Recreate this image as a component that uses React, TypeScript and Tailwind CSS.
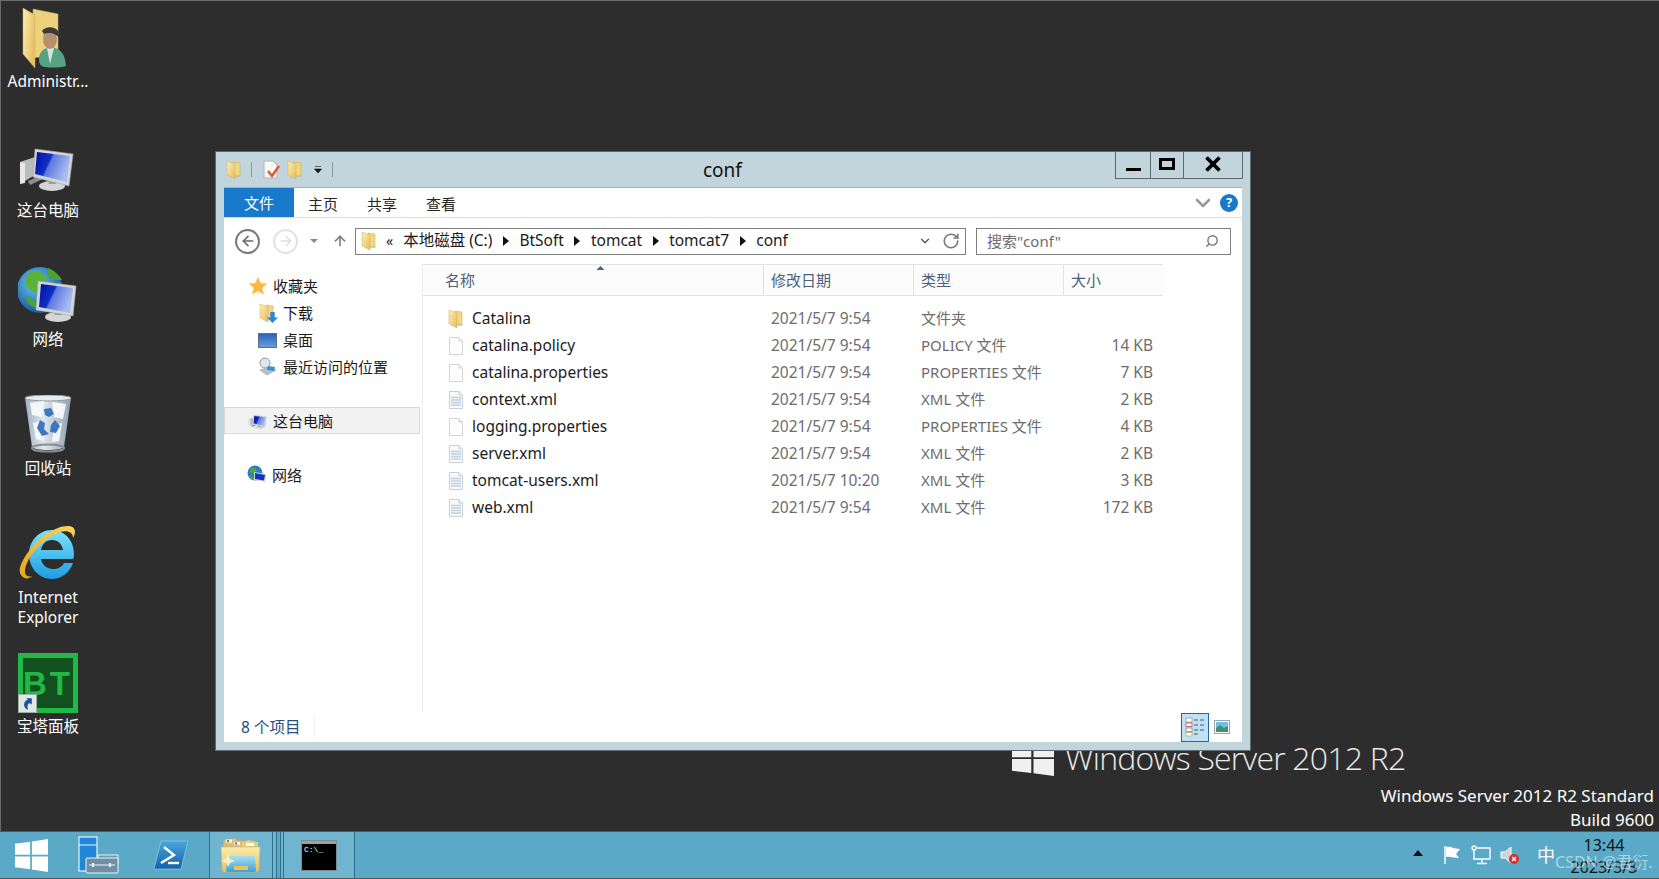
import React from "react";
import { ArrowLeft, ArrowRight, ArrowUp, ChevronDown, RotateCw, Search, X } from "lucide-react";

// 小图标
function SmallFolder({ className = "" }: { className?: string }) {
  return (
    <svg viewBox="0 0 18 20" className={className}>
      <defs>
        <linearGradient id="sf" x1="0" y1="0" x2="1" y2="1">
          <stop offset="0" stopColor="#fdf0b4" />
          <stop offset="1" stopColor="#e3bc5c" />
        </linearGradient>
      </defs>
      <path d="M8 2 L15 3 L15 16 L8 16 Z" fill="#f3d67f" stroke="#cda94f" strokeWidth="0.5" />
      <path d="M2 1 L10 4 L10 19 L2 15 Z" fill="url(#sf)" stroke="#d0ae58" strokeWidth="0.5" />
      <path d="M10 17 L16 17 L15 15 L10 15 Z" fill="#b9b9b0" opacity="0.5" />
    </svg>
  );
}

function BlankFile() {
  return (
    <svg viewBox="0 0 18 20" className="h-5 w-[18px]">
      <path d="M2.5 1.5 H12 L15.5 5 V18.5 H2.5 Z" fill="#fdfdfd" stroke="#d3d3d3" />
      <path d="M12 1.5 V5 H15.5" fill="#f0f0f0" stroke="#d3d3d3" />
    </svg>
  );
}

function XmlFile() {
  return (
    <svg viewBox="0 0 18 20" className="h-5 w-[18px]">
      <path d="M2.5 1.5 H12 L15.5 5 V18.5 H2.5 Z" fill="#f7f9fb" stroke="#c9ced3" />
      <path d="M12 1.5 V5 H15.5" fill="#eef0f2" stroke="#c9ced3" />
      <path d="M4 7.5 H14 M4 10 H14 M4 12.5 H14 M4 15 H14" stroke="#c0d0e0" strokeWidth="1.4" />
    </svg>
  );
}

function Monitor({ className = "" }: { className?: string }) {
  return (
    <svg viewBox="0 0 60 60" className={className}>
      <defs>
        <linearGradient id="scr" x1="0" y1="0" x2="1" y2="0.4">
          <stop offset="0" stopColor="#00109c" />
          <stop offset="0.45" stopColor="#1030c8" />
          <stop offset="0.5" stopColor="#5c78e0" />
          <stop offset="1" stopColor="#a8bcf0" />
        </linearGradient>
      </defs>
      <path d="M2 25 L17 20 V38 L2 47 Z" fill="#b9bcbc" />
      <path d="M2 25 L7 26 V46 L2 47 Z" fill="#e6e8e6" />
      <path d="M10 44 L24 38 L27 41 L12 48 Z" fill="#8d8f8e" />
      <ellipse cx="34" cy="49" rx="13" ry="5" fill="#d5d5d5" />
      <path d="M28 38 H40 L38 47 H31 Z" fill="#9a9a9a" />
      <path d="M17 12 L55 17 L51 49 L15 40 Z" fill="#d3d6d8" stroke="#a5a8aa" strokeWidth="0.6" />
      <path d="M19 15 L52 19 L49 45 L17 37 Z" fill="url(#scr)" />
    </svg>
  );
}

function DesktopIcon({ label, children }: { label: React.ReactNode; children: React.ReactNode }) {
  return (
    <div className="flex h-[129px] w-[96px] flex-col items-center">
      <div className="h-[60px] w-[60px] shrink-0">{children}</div>
      <div className="mt-[3px] text-center text-[15.5px] leading-[20px] text-white">{label}</div>
    </div>
  );
}

function AdminIcon() {
  return (
    <svg viewBox="0 0 60 60" className="h-[60px] w-[60px]">
      <defs>
        <linearGradient id="adf" x1="0" y1="0" x2="1" y2="0.4">
          <stop offset="0" stopColor="#fdeeb0" />
          <stop offset="1" stopColor="#e7c062" />
        </linearGradient>
      </defs>
      <path d="M15 1 L40 6 L40 46 L15 50 Z" fill="#edd27c" stroke="#cfae5c" strokeWidth="0.5" />
      <path d="M5 0 L17 7 L17 60 L5 46 Z" fill="url(#adf)" stroke="#cfae5c" strokeWidth="0.5" />
      <path d="M21 52 C21 43 26 40 33 39 C41 40 47 44 48 58 C42 60 26 60 24 58 C22 57 21 55 21 52 Z" fill="#58a284" />
      <path d="M29 40 L36 40 L32 56 Z" fill="#d6e4e2" />
      <ellipse cx="32" cy="31" rx="7" ry="10" fill="#b78e6e" />
      <path d="M24 23 C27 18 37 18 40 23 L41 30 C38 25 30 24 26 26 Z" fill="#3a3a3a" />
    </svg>
  );
}

function GlobeIcon() {
  return (
    <svg viewBox="0 0 60 60" className="h-[60px] w-[60px]">
      <defs>
        <radialGradient id="gl" cx="0.4" cy="0.35" r="0.7">
          <stop offset="0" stopColor="#6ecbf0" />
          <stop offset="1" stopColor="#0f4f9c" />
        </radialGradient>
        <linearGradient id="scr2" x1="0" y1="0" x2="1" y2="0.4">
          <stop offset="0" stopColor="#00109c" />
          <stop offset="0.45" stopColor="#1030c8" />
          <stop offset="0.5" stopColor="#5c78e0" />
          <stop offset="1" stopColor="#a8bcf0" />
        </linearGradient>
      </defs>
      <circle cx="22" cy="24" r="23" fill="url(#gl)" />
      <path d="M10 8 C16 3 24 6 28 10 C30 16 22 16 20 22 C22 30 14 26 10 22 C6 18 8 12 10 8 Z" fill="#5cb13a" />
      <path d="M30 2 C36 4 42 10 44 14 L34 14 C30 10 28 6 30 2 Z M8 30 C14 32 20 38 24 42 C16 44 8 38 8 30 Z" fill="#4aa233" />
      <ellipse cx="40" cy="51" rx="13" ry="5" fill="#d5d5d5" />
      <path d="M34 42 H46 L44 49 H37 Z" fill="#9a9a9a" />
      <path d="M20 15 L58 20 L55 50 L18 44 Z" fill="#d3d6d8" stroke="#a5a8aa" strokeWidth="0.6" />
      <path d="M23 18 L55 22 L52 47 L21 41 Z" fill="url(#scr2)" />
    </svg>
  );
}

function RecycleIcon() {
  return (
    <svg viewBox="0 0 60 60" className="h-[60px] w-[60px]">
      <defs>
        <linearGradient id="bin" x1="0" y1="0" x2="1" y2="0">
          <stop offset="0" stopColor="#9eb0c2" />
          <stop offset="0.4" stopColor="#dfe8f0" />
          <stop offset="1" stopColor="#90a0b0" />
        </linearGradient>
      </defs>
      <path d="M7 3 L53 3 L46 52 C44 56 16 56 14 52 Z" fill="url(#bin)" />
      <ellipse cx="30" cy="3" rx="23" ry="3" fill="#e8ecf0" stroke="#9a9a9a" />
      <path d="M12 8 L26 6 L24 22 L14 20 Z M34 7 L48 9 L45 24 L36 22 Z M15 28 L24 26 L26 46 L18 44 Z M36 30 L44 28 L41 46 L34 47 Z" fill="#f4f7fa" />
      <path d="M26 14 L33 13 L36 19 L31 22 L27 20 Z M37 25 L42 31 L38 38 L32 37 L33 30 Z M22 25 L27 28 L26 34 L31 39 L24 41 L19 33 Z" fill="#3f76c4" />
      <ellipse cx="30" cy="53" rx="16" ry="3.5" fill="none" stroke="#8d8d8d" strokeWidth="2" />
    </svg>
  );
}

function IeIcon() {
  return (
    <svg viewBox="0 0 60 60" className="h-[60px] w-[60px]">
      <defs>
        <linearGradient id="ie" x1="0" y1="0" x2="0" y2="1">
          <stop offset="0" stopColor="#7de2f8" />
          <stop offset="1" stopColor="#1d9de2" />
        </linearGradient>
        <linearGradient id="ier" x1="0" y1="1" x2="1" y2="0">
          <stop offset="0" stopColor="#e8a51c" />
          <stop offset="1" stopColor="#fbd35c" />
        </linearGradient>
      </defs>
      <path fillRule="evenodd" fill="url(#ie)" d="M34 6 C46 6 56 16 56 30 C56 32 56 33 55 35 L23 35 C24 41 29 45 35 45 C40 45 44 43 46 39 L55 39 C52 48 44 55 34 55 C21 55 11 44 11 30 C11 17 21 6 34 6 Z M23 26 L45 26 C44 20 40 16 34 16 C28 16 24 20 23 26 Z" />
      <path d="M2 49 C-1 40 18 12 40 4 C48 1 57 1 57 8 C57 10 56 12 55 14 C55 8 50 6 42 8 C24 14 6 36 7 49 C8 52 10 53 14 52 C10 56 4 55 2 49 Z" fill="url(#ier)" />
    </svg>
  );
}

function BtIcon() {
  return (
    <div className="relative flex h-[60px] w-[60px] items-center justify-center border-[5px] border-[#22b845] bg-[#12501f]">
      <span className="font-['Liberation_Sans',sans-serif] text-[33px] font-bold leading-none tracking-[3px] text-[#22b845]">BT</span>
      <div className="absolute bottom-[-5px] left-[-5px] flex h-[19px] w-[19px] items-center justify-center border border-[#9ab0a8] bg-[#dfe8e4]">
        <svg viewBox="0 0 14 14" className="h-[15px] w-[15px]">
          <path d="M11 2 L11 8 L9 6.5 C7 7.5 6.5 9 7.5 13 C4 11.5 3 8 4.5 5.5 C5.5 4 6.5 3.5 7.5 3.5 L6 2 Z" fill="#1f4f9c" />
        </svg>
      </div>
    </div>
  );
}

// 任务栏图标
function CmdIcon() {
  return (
    <div className="w-[36px] border border-[#7d8a90] bg-[#9aa3a8] pt-[3px]">
      <div className="h-[26px] bg-black px-[2px] font-['Liberation_Mono',monospace] text-[8px] leading-[12px] text-white">C:\_</div>
    </div>
  );
}

function ExplorerTaskIcon() {
  return (
    <svg viewBox="0 0 42 36" className="h-[36px] w-[42px]">
      <defs>
        <linearGradient id="tf" x1="0" y1="0" x2="0" y2="1">
          <stop offset="0" stopColor="#f9ecaa" />
          <stop offset="1" stopColor="#e5c25e" />
        </linearGradient>
        <linearGradient id="tb" x1="0" y1="0" x2="0" y2="1">
          <stop offset="0" stopColor="#a9e0f4" />
          <stop offset="1" stopColor="#3f9fd4" />
        </linearGradient>
      </defs>
      <path d="M3 3 L15 1 L17 3 L37 5 L37 12 L3 12 Z" fill="#d9c078" stroke="#b49c55" strokeWidth="0.5" />
      <rect x="6" y="2.5" width="6" height="3" fill="#fafafa" />
      <rect x="7" y="3" width="2" height="2" fill="#3e9e3a" />
      <rect x="14" y="5" width="6" height="3" fill="#fafafa" />
      <rect x="15" y="5.5" width="2" height="2" fill="#c83a2a" />
      <path d="M22 6 L28 3 L38 5 L38 12 L22 12 Z" fill="#e7cd7c" />
      <rect x="26" y="6" width="8" height="3" fill="#fafafa" />
      <path d="M1 10 H40 L39 32 C39 34 38 35 36 35 H4 C2 35 2 34 2 32 Z" fill="url(#tf)" stroke="#cfae55" strokeWidth="0.5" />
      <path d="M6 32 L7 21 C7 19 8 19 10 19 H32 C34 19 35 19 35 21 L36 33 C36 35 35 35 34 35 H8 C7 35 6 34 6 32 Z" fill="url(#tb)" />
      <path d="M14 29 H28 V33 H14 Z" fill="#e3c560" />
      <path d="M1 24 L6 22 L8 17 L10 22 L15 24 L10 26 L8 30 L6 26 Z" fill="#fff6c8" opacity="0.85" />
    </svg>
  );
}

const files = [
  { name: "Catalina", date: "2021/5/7 9:54", type: "文件夹", size: "", kind: "folder" },
  { name: "catalina.policy", date: "2021/5/7 9:54", type: "POLICY 文件", size: "14 KB", kind: "blank" },
  { name: "catalina.properties", date: "2021/5/7 9:54", type: "PROPERTIES 文件", size: "7 KB", kind: "blank" },
  { name: "context.xml", date: "2021/5/7 9:54", type: "XML 文件", size: "2 KB", kind: "xml" },
  { name: "logging.properties", date: "2021/5/7 9:54", type: "PROPERTIES 文件", size: "4 KB", kind: "blank" },
  { name: "server.xml", date: "2021/5/7 9:54", type: "XML 文件", size: "2 KB", kind: "xml" },
  { name: "tomcat-users.xml", date: "2021/5/7 10:20", type: "XML 文件", size: "3 KB", kind: "xml" },
  { name: "web.xml", date: "2021/5/7 9:54", type: "XML 文件", size: "172 KB", kind: "xml" },
];

const crumbs = ["本地磁盘 (C:)", "BtSoft", "tomcat", "tomcat7"];

function Crumbs() {
  return (
    <div className="flex items-center text-[15.5px] leading-none text-[#1a1a1a]">
      {crumbs.map((c) => (
        <React.Fragment key={c}>
          <span>{c}</span>
          <svg viewBox="0 0 6 10" className="mx-[10.5px] h-[10px] w-[6px]">
            <path d="M0 0 L6 5 L0 10 Z" fill="#111" />
          </svg>
        </React.Fragment>
      ))}
      <span>conf</span>
    </div>
  );
}

function ExplorerWindow() {
  return (
    <div className="absolute left-[214px] top-[150px] flex h-[600px] w-[1036px] flex-col border border-[#5c6a70] bg-[#c3d5dc] px-[8px] pb-[8px]">
      {/* 标题栏 */}
      <div className="relative flex h-[35px] shrink-0 items-center">
        <SmallFolder className="ml-[1px] h-[20px] w-[18px]" />
        <div className="ml-[8px] h-[15px] w-px bg-[#8c9a9f]" />
        <svg viewBox="0 0 18 20" className="ml-[10px] h-[20px] w-[18px]">
          <path d="M2 1 H11 L15 5 V18 H2 Z" fill="#f7f7f7" stroke="#b5b5b5" />
          <path d="M6 11 L10 16 L17 6" fill="none" stroke="#d85a35" strokeWidth="2.4" />
        </svg>
        <SmallFolder className="ml-[6px] h-[20px] w-[18px]" />
        <svg viewBox="0 0 8 8" className="ml-[10px] h-[8px] w-[8px]">
          <path d="M1 0.5 H7 M0.5 3 H7.5 L4 7 Z" fill="#111" stroke="#111" strokeWidth="0.6" />
        </svg>
        <div className="ml-[10px] h-[15px] w-px bg-[#8c9a9f]" />
        <div className="absolute left-[479px] top-[6px] text-[19px] leading-[24px] text-[#111]">conf</div>
        <div className="ml-auto mr-[-1px] flex h-[27px] self-start border border-t-0 border-[#5c6a70]">
          <div className="flex w-[35px] items-end justify-center border-r border-[#5c6a70] pb-[7px]">
            <div className="h-[3px] w-[15px] bg-black" />
          </div>
          <div className="flex w-[33px] items-center justify-center border-r border-[#5c6a70] pb-[3px]">
            <div className="h-[12px] w-[16px] border-[3px] border-black" />
          </div>
          <div className="flex w-[58px] items-center justify-center pb-[2px]">
            <X className="h-[26px] w-[26px] text-black" strokeWidth={3.4} strokeLinecap="butt" />
          </div>
        </div>
      </div>

      <div className="flex min-h-0 flex-1 flex-col border-t border-[#a4b2b8] bg-white">
        {/* 选项卡 */}
        <div className="flex h-[30px] shrink-0 items-center border-b border-[#dadbdc] text-[15px] text-[#262626]">
          <div className="flex h-[29px] w-[70px] items-center justify-center bg-[#1979ca] pt-[2px] text-white">文件</div>
          <div className="ml-[14px] pt-[3px]">主页</div>
          <div className="ml-[29px] pt-[3px]">共享</div>
          <div className="ml-[29px] pt-[3px]">查看</div>
          <ChevronDown className="ml-auto h-[24px] w-[24px] text-[#9a9a9a]" strokeWidth={2.6} />
          <div className="ml-[5px] mr-[4px] flex h-[18px] w-[18px] items-center justify-center rounded-full bg-[#1979ca] text-[13px] font-bold leading-none text-white">?</div>
        </div>

        {/* 地址栏 */}
        <div className="flex h-[46px] shrink-0 items-center pl-[11px] pr-[10px]">
          <div className="flex h-[25px] w-[25px] items-center justify-center rounded-full border-2 border-[#7b7b7b]">
            <ArrowLeft className="h-[16px] w-[16px] text-[#6a6a6a]" strokeWidth={2.4} />
          </div>
          <div className="ml-[13px] flex h-[25px] w-[25px] items-center justify-center rounded-full border-2 border-[#e2e2e2]">
            <ArrowRight className="h-[16px] w-[16px] text-[#dedede]" strokeWidth={2} />
          </div>
          <svg viewBox="0 0 8 4" className="ml-[12px] h-[4px] w-[8px]">
            <path d="M0 0 H8 L4 4 Z" fill="#8a8a8a" />
          </svg>
          <ArrowUp className="ml-[14px] h-[16px] w-[16px] text-[#7c7c7c]" strokeWidth={2.4} />
          <div className="ml-[7px] flex h-[27px] w-[611px] items-center border border-[#7f7f7f] pl-[4px]">
            <SmallFolder className="h-[20px] w-[18px]" />
            <span className="ml-[8px] mr-[10px] text-[14px] leading-none text-[#222]">«</span>
            <Crumbs />
            <ChevronDown className="ml-auto h-[14px] w-[14px] text-[#555]" strokeWidth={2.2} />
            <RotateCw className="ml-[10px] mr-[5px] h-[18px] w-[18px] text-[#7a7a7a]" strokeWidth={2.2} />
          </div>
          <div className="ml-[10px] flex h-[27px] w-[255px] items-center border border-[#7f7f7f] pl-[10px] pr-[11px] text-[15px] text-[#6d6d6d]">
            <span>搜索"conf"</span>
            <Search className="ml-auto h-[14px] w-[14px] -scale-x-100 text-[#7a7a7a]" strokeWidth={2.4} />
          </div>
        </div>

        <div className="flex min-h-0 flex-1">
          {/* 导航窗格 */}
          <div className="flex w-[199px] shrink-0 flex-col border-r border-[#ececec] text-[15px] leading-[20px] text-[#1a1a1a]">
            <div className="ml-[24px] mt-[11px] flex h-[22px] items-center">
              <svg viewBox="0 0 20 20" className="h-[20px] w-[20px]">
                <path d="M10 1 L12.6 7 L19 7.6 L14.2 12 L15.8 18.6 L10 15 L4.2 18.6 L5.8 12 L1 7.6 L7.4 7 Z" fill="#fbb83a" stroke="#f4d996" strokeWidth="0.6" />
              </svg>
              <span className="ml-[5px]">收藏夹</span>
            </div>
            <div className="ml-[34px] mt-[5px] flex h-[22px] items-center">
              <div className="relative h-[20px] w-[20px]">
                <SmallFolder className="h-[20px] w-[18px]" />
                <ArrowDownMini />
              </div>
              <span className="ml-[5px]">下载</span>
            </div>
            <div className="ml-[34px] mt-[5px] flex h-[22px] items-center">
              <div className="h-[15px] w-[19px] border border-[#5e6f80] bg-gradient-to-b from-[#2a63b8] to-[#6a9ae0]" />
              <span className="ml-[6px]">桌面</span>
            </div>
            <div className="ml-[34px] mt-[5px] flex h-[22px] items-center">
              <svg viewBox="0 0 20 20" className="h-[20px] w-[20px]">
                <circle cx="7" cy="6" r="5" fill="#dfe6ec" stroke="#8d9aa5" />
                <path d="M2 13 L12 10 L18 13 L9 18 Z" fill="#b8c2cc" stroke="#8d9aa5" strokeWidth="0.6" />
                <path d="M10 9 L17 10 L16 14 L9 13 Z" fill="#3d8fce" />
              </svg>
              <span className="ml-[5px]">最近访问的位置</span>
            </div>
            <div className="mr-[2px] mt-[29px] flex h-[27px] items-center border border-[#dadada] bg-[#f2f2f2] pl-[23px]">
              <Monitor className="h-[20px] w-[20px]" />
              <span className="ml-[5px]">这台电脑</span>
            </div>
            <div className="ml-[23px] mt-[30px] flex h-[22px] items-center">
              <GlobeMini />
              <span className="ml-[5px]">网络</span>
            </div>
          </div>

          {/* 文件列表 */}
          <div className="min-w-0 flex-1">
            <div className="relative grid h-[32px] w-[740px] grid-cols-[340px_150px_150px_100px] border-y border-[#e2e2e2] bg-[#fcfcfc] text-[15px] leading-[30px] text-[#4c607a]">
              <div className="pl-[22px]">名称</div>
              <div className="border-l border-[#e2e2e2] pl-[7px]">修改日期</div>
              <div className="border-l border-[#e2e2e2] pl-[7px]">类型</div>
              <div className="border-l border-[#e2e2e2] pl-[7px]">大小</div>
              <svg viewBox="0 0 8 4" className="absolute left-[173px] top-[1px] h-[4px] w-[9px]">
                <path d="M0 4 L4 0 L8 4 Z" fill="#4c607a" />
              </svg>
            </div>
            <div className="w-[740px] pt-[9px]">
              {files.map((f) => (
                <div key={f.name} className="grid h-[27px] grid-cols-[340px_150px_150px_100px] items-center text-[15.5px]">
                  <div className="flex items-center pl-[24px] text-[#1c1c1c]">
                    {f.kind === "folder" ? (
                      <SmallFolder className="h-5 w-[18px]" />
                    ) : f.kind === "xml" ? (
                      <XmlFile />
                    ) : (
                      <BlankFile />
                    )}
                    <span className="ml-[7px]">{f.name}</span>
                  </div>
                  <div className="pl-[8px] text-[15.5px] text-[#6d6d6d]">{f.date}</div>
                  <div className="pl-[8px] text-[15px] text-[#6d6d6d]">{f.type}</div>
                  <div className="pr-[10px] text-right text-[15.5px] text-[#6d6d6d]">{f.size}</div>
                </div>
              ))}
            </div>
          </div>
        </div>

        {/* 状态栏 */}
        <div className="flex h-[30px] shrink-0 items-center">
          <span className="ml-[17px] pt-[2px] text-[15.5px] text-[#26507c]">8 个项目</span>
          <div className="ml-[14px] h-[20px] w-px bg-[#f0f0f0]" />
          <div className="ml-auto mr-[12px] flex items-end">
            <div className="flex h-[29px] w-[28px] items-center justify-center border border-[#26689c] bg-[#bfe0f6]">
              <svg viewBox="0 0 20 20" className="h-[20px] w-[20px]">
                <rect x="1" y="1" width="6" height="4" fill="#fff" stroke="#8a9a70" strokeWidth="0.7" />
                <rect x="1" y="6" width="6" height="3.5" fill="#fff" stroke="#c0392b" strokeWidth="0.7" />
                <rect x="1" y="11" width="6" height="3.5" fill="#fff" stroke="#5a80b0" strokeWidth="0.7" />
                <rect x="1" y="15.5" width="6" height="3.5" fill="#fff" stroke="#b0a840" strokeWidth="0.7" />
                <path d="M9 3 H13 M15 3 H19 M9 8 H13 M15 8 H19 M9 13 H13 M15 13 H19 M9 17 H13" stroke="#4a5a70" strokeWidth="1" />
              </svg>
            </div>
            <svg viewBox="0 0 16 14" className="mb-[8px] ml-[5px] h-[14px] w-[16px]">
              <rect x="0.5" y="0.5" width="15" height="13" fill="#fff" stroke="#9aa6b2" />
              <rect x="2" y="2" width="12" height="6" fill="#6fc0e8" />
              <path d="M2 8 L6 5 L10 8 L14 6 V12 H2 Z" fill="#3f8f70" />
            </svg>
          </div>
        </div>
      </div>
    </div>
  );
}

function ArrowDownMini() {
  return (
    <svg viewBox="0 0 10 10" className="absolute bottom-0 right-0 h-[11px] w-[11px]">
      <path d="M3 0 H7 V5 H10 L5 10 L0 5 H3 Z" fill="#2f86d0" />
    </svg>
  );
}

function GlobeMini() {
  return (
    <svg viewBox="0 0 20 20" className="h-[20px] w-[20px]">
      <circle cx="8" cy="8" r="7.5" fill="#2a7ec4" />
      <path d="M3 4 C6 2 10 3 9 6 C7 9 5 8 3 7 Z M2 10 C5 11 7 13 8 15 C5 15 3 13 2 10 Z" fill="#4faa3a" />
      <path d="M7 7 L19 9 L18 17 L7 15 Z" fill="#d3d6d8" />
      <path d="M8 8 L18 10 L17 15.6 L8 14 Z" fill="#1733b8" />
    </svg>
  );
}

function WinLogo({ className = "", color = "white" }: { className?: string; color?: string }) {
  return (
    <svg viewBox="0 0 34 34" preserveAspectRatio="none" className={className}>
      <path d="M0 5 L15.6 2.8 V16.2 H0 Z M17.4 2.5 L34 0 V16.2 H17.4 Z M0 18 H15.6 V31.2 L0 29 Z M17.4 18 H34 V34 L17.4 31.5 Z" fill={color} />
    </svg>
  );
}

function Taskbar() {
  return (
    <div className="flex h-[48px] shrink-0 items-stretch border-y border-[#4b5b62] bg-[#5aaac7] pl-[1px] text-[#111]">
      <div className="flex w-[209px] items-center border-r border-[#2e6e88]">
        <WinLogo className="ml-[14px] h-[33px] w-[33px]" />
        <svg viewBox="0 0 42 38" className="ml-[30px] h-[38px] w-[42px]">
          <rect x="1" y="1" width="18" height="34" fill="#1f86d8" stroke="#e6f4fa" strokeWidth="1.2" />
          <path d="M1 9 H19" stroke="#e6f4fa" />
          <rect x="20" y="19" width="20" height="8" fill="#6f97ab" stroke="#e6f4fa" strokeWidth="1" />
          <rect x="8" y="22" width="32" height="15" rx="1" fill="#6f8fa5" stroke="#eef6fa" strokeWidth="1" />
          <path d="M11 29 H37" stroke="#eef6fa" />
          <rect x="14" y="27" width="2" height="4" fill="#eef6fa" />
          <rect x="31" y="27" width="2" height="4" fill="#eef6fa" />
        </svg>
        <svg viewBox="0 0 36 32" className="ml-[33px] h-[32px] w-[36px]">
          <defs>
            <linearGradient id="ps" x1="0" y1="0" x2="0" y2="1">
              <stop offset="0" stopColor="#4aa6de" />
              <stop offset="1" stopColor="#1460a8" />
            </linearGradient>
          </defs>
          <path d="M8 2 H35 L28 30 H1 Z" fill="url(#ps)" stroke="#8cc4e4" strokeWidth="0.8" />
          <path d="M11 8 L21 16 L8 24" fill="none" stroke="white" strokeWidth="2.4" />
          <path d="M15 24 H26" stroke="white" strokeWidth="2.4" />
        </svg>
      </div>
      <div className="flex w-[63px] items-center justify-center border-r border-[#2e6e88] bg-[#6fb5d0]">
        <ExplorerTaskIcon />
      </div>
      <div className="w-[4px] border-r border-[#2e6e88] bg-[#6fb5d0]" />
      <div className="w-[4px] border-r border-[#2e6e88]" />
      <div className="w-[3px] border-r border-[#2e6e88] bg-[#6fb5d0]" />
      <div className="flex w-[71px] items-center justify-center border-r border-[#2e6e88] bg-[#6fb5d0]">
        <CmdIcon />
      </div>
      {/* 通知区域 */}
      <div className="ml-auto flex items-center pr-[15px]">
        <svg viewBox="0 0 10 6" className="mt-[-4px] h-[6px] w-[10px]">
          <path d="M0 6 L5 0 L10 6 Z" fill="#111" />
        </svg>
        <svg viewBox="0 0 18 20" className="ml-[20px] h-[20px] w-[18px]">
          <path d="M2 1 V19" stroke="white" strokeWidth="1.4" />
          <path d="M3 2 C8 1 10 4 17 4 L13 9 L16 13 C10 13 8 11 3 12 Z" fill="#fff" />
        </svg>
        <svg viewBox="0 0 20 20" className="ml-[10px] h-[20px] w-[20px]" fill="none" stroke="white" strokeWidth="1.4">
          <circle cx="3" cy="3" r="2" />
          <path d="M3 5 V15 M6 3 H19 V14 H3 M11 14 V18 M6 18.5 H16" />
        </svg>
        <svg viewBox="0 0 20 20" className="ml-[9px] h-[20px] w-[20px]">
          <path d="M1 7 H5 L11 2 V18 L5 13 H1 Z" fill="#c9d3d8" stroke="white" strokeWidth="1" />
          <circle cx="14" cy="14" r="5" fill="#d92d2d" />
          <path d="M12 12 L16 16 M16 12 L12 16" stroke="white" strokeWidth="1.4" />
        </svg>
        <span className="ml-[17px] text-[18px] leading-none text-white">中</span>
        <div className="ml-[9px] flex w-[80px] flex-col items-center pt-[1px] text-[16px] leading-[22px] text-[#111]">
          <span>13:44</span>
          <span>2023/3/3</span>
        </div>
      </div>
    </div>
  );
}

export default function App() {
  return (
    <div className="flex h-[879px] w-[1659px] flex-col overflow-hidden bg-[#2d2d2d] font-['Noto_Sans','Noto_Sans_CJK_SC',sans-serif]">
      <div className="relative min-h-0 flex-1 border-l border-t border-[#6a6a6a]">
        {/* 桌面图标 */}
        <div className="ml-[-1px] pt-[7px]">
          <DesktopIcon label="Administr..."><AdminIcon /></DesktopIcon>
          <DesktopIcon label="这台电脑"><Monitor className="h-[60px] w-[60px]" /></DesktopIcon>
          <DesktopIcon label="网络"><GlobeIcon /></DesktopIcon>
          <DesktopIcon label="回收站"><RecycleIcon /></DesktopIcon>
          <DesktopIcon label={<>Internet<br />Explorer</>}><IeIcon /></DesktopIcon>
          <DesktopIcon label="宝塔面板"><BtIcon /></DesktopIcon>
        </div>

        {/* 水印 */}
        <div className="absolute left-[1011px] top-[739px] flex items-center text-[#e8e8e8]">
          <WinLogo className="h-[36px] w-[42px]" color="#f0f0f0" />
          <span className="ml-[11px] font-['Open_Sans',sans-serif] text-[32px] font-light leading-[36px] tracking-[-0.8px]">Windows Server 2012 R2</span>
        </div>
        <div className="absolute right-[5px] top-[783px] text-right text-[17px] leading-[24px] text-white">
          <div>Windows Server 2012 R2 Standard</div>
          <div>Build 9600</div>
        </div>

        <ExplorerWindow />
      </div>
      <Taskbar />
      <div className="pointer-events-none absolute left-[1555px] top-[852px] text-[16px] leading-[20px] text-white/50">CSDN @君衍.</div>
    </div>
  );
}
